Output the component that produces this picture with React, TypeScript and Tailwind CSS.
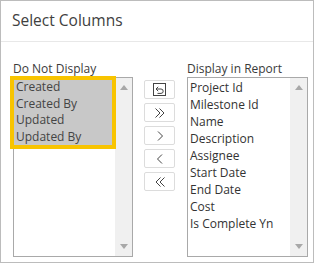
import React from "react";

const hidden = ["Created", "Created By", "Updated", "Updated By"];
const shown = [
  "Project Id",
  "Milestone Id",
  "Name",
  "Description",
  "Assignee",
  "Start Date",
  "End Date",
  "Cost",
  "Is Complete Yn",
];

function ScrollBar() {
  return (
    <div className="w-[17px] h-full bg-[#f0f0f0] flex flex-col justify-between items-center py-[7px]">
      <svg width="8" height="5" viewBox="0 0 8 5">
        <path d="M0 5 L4 0 L8 5 Z" fill="#a8a8a8" />
      </svg>
      <svg width="8" height="5" viewBox="0 0 8 5">
        <path d="M0 0 L8 0 L4 5 Z" fill="#a8a8a8" />
      </svg>
    </div>
  );
}

function MoveButton({ children }: { children: React.ReactNode }) {
  return (
    <button
      type="button"
      className="w-[31px] h-[19px] border border-[#dcdcdc] rounded-[2px] bg-white flex items-center justify-center text-[#333]"
    >
      {children}
    </button>
  );
}

const stroke = { fill: "none", stroke: "#444", strokeWidth: 1 };

export default function App() {
  return (
    <div
      className="w-[314px] h-[263px] border border-[#bcbcbc] bg-white text-[#333] flex flex-col"
      style={{ fontFamily: '"Open Sans", "Noto Sans", sans-serif' }}
    >
      {/* Header */}
      <div className="h-[41px] shrink-0 border-b border-[#e8e8e8] px-[11px] flex items-center text-[15.5px] text-[#404040]">
        Select Columns
      </div>

      {/* Body */}
      <div className="flex-1 flex pl-[12px] pr-[3px] pt-[19px] pb-[5px] gap-[11px]">
        {/* Left list */}
        <div className="flex flex-col w-[120px]">
          <div className="text-[12px] leading-[16px] h-[16px] text-[#3a3a3a]">Do Not Display</div>
          <div className="relative flex-1 border border-[#a9a9a9] flex">
            <div className="flex-1 flex flex-col pt-[1px] text-[12px] leading-[16.5px]">
              {hidden.map((h) => (
                <div key={h} className="bg-[#c8c8c8] pl-[2px] text-[#444]">
                  {h}
                </div>
              ))}
            </div>
            <ScrollBar />
            <div className="absolute left-[-4px] top-[-2px] w-[106px] h-[73px] border-[4px] border-[#f8c400]" />
          </div>
        </div>

        {/* Buttons */}
        <div className="flex flex-col gap-[4px] pt-[19px]">
          <MoveButton>
            <svg width="15" height="15" viewBox="0 0 15 15">
              <rect x="1.5" y="1.5" width="12" height="12" {...stroke} />
              <path d="M4 7 H9 A2.2 2.2 0 0 1 9 11.4 H5.5" {...stroke} />
              <path d="M6.2 4.8 L4 7 L6.2 9.2" {...stroke} />
            </svg>
          </MoveButton>
          <MoveButton>
            <svg width="14" height="12" viewBox="0 0 14 12">
              <path d="M2.5 1.5 L7 6 L2.5 10.5" {...stroke} />
              <path d="M6.5 1.5 L11 6 L6.5 10.5" {...stroke} />
            </svg>
          </MoveButton>
          <MoveButton>
            <svg width="10" height="12" viewBox="0 0 10 12">
              <path d="M3 1.5 L7.5 6 L3 10.5" {...stroke} />
            </svg>
          </MoveButton>
          <MoveButton>
            <svg width="10" height="12" viewBox="0 0 10 12">
              <path d="M7 1.5 L2.5 6 L7 10.5" {...stroke} />
            </svg>
          </MoveButton>
          <MoveButton>
            <svg width="14" height="12" viewBox="0 0 14 12">
              <path d="M7.5 1.5 L3 6 L7.5 10.5" {...stroke} />
              <path d="M11.5 1.5 L7 6 L11.5 10.5" {...stroke} />
            </svg>
          </MoveButton>
        </div>

        {/* Right list */}
        <div className="flex flex-col w-[121px] ml-[1px]">
          <div className="text-[12px] leading-[16px] h-[16px] text-[#3a3a3a]">Display in Report</div>
          <div className="flex-1 border border-[#a9a9a9] flex">
            <div className="flex-1 flex flex-col pt-[1px] text-[12px] leading-[17px]">
              {shown.map((s) => (
                <div key={s} className="pl-[2px] text-[#333]">
                  {s}
                </div>
              ))}
            </div>
            <ScrollBar />
          </div>
        </div>
      </div>
    </div>
  );
}
